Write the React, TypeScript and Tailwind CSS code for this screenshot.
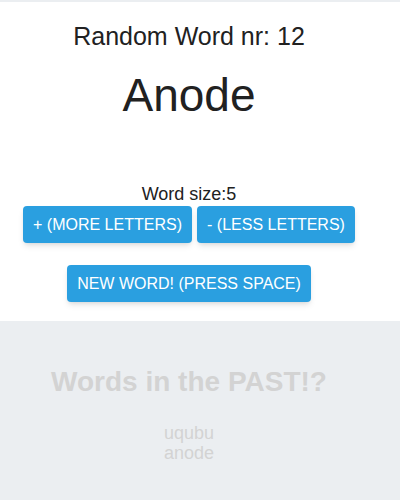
const App = () => {
    const pastWords = ["uqubu", "anode"];

    return (
        <div className="w-[400px] h-[500px] bg-[#ebeef1] font-['Liberation_Sans',Arial,sans-serif] text-[#212121] overflow-hidden">
            <div className="h-[2px]" />
            <div className="bg-white h-[319px] w-full">
                <div className="flex flex-col items-center w-[378px]">
                    <h2 className="mt-[19px] text-[25px] leading-[30px]">Random Word nr: 12</h2>
                    <h1 className="mt-[18px] text-[46px] leading-[52px]">Anode</h1>
                    <div className="mt-[63px] text-[18px] leading-[20px]">Word size:5</div>
                    <div className="flex gap-[5px] mt-[2px]">
                        <button className="bg-[#2a9fe0] text-white uppercase text-[16px] leading-[23px] px-[10px] py-[7px] rounded shadow-md w-[169px]">
                            + (more letters)
                        </button>
                        <button className="bg-[#2a9fe0] text-white uppercase text-[16px] leading-[23px] px-[10px] py-[7px] rounded shadow-md w-[158px]">
                            - (less letters)
                        </button>
                    </div>
                    <button className="mt-[22px] bg-[#2a9fe0] text-white uppercase text-[16px] leading-[23px] px-[10px] py-[7px] rounded shadow-md w-[244px]">
                        New word! (press space)
                    </button>
                </div>
            </div>
            <div className="flex flex-col items-center w-[378px] text-[#d3d3d3]">
                <h2 className="mt-[45px] text-[28px] leading-[32px] font-bold">Words in the PAST!?</h2>
                <div className="mt-[25px] flex flex-col items-center text-[18px] leading-[20px]">
                    {pastWords.map((w) => (
                        <div key={w}>{w}</div>
                    ))}
                </div>
            </div>
        </div>
    );
};

export default App;
